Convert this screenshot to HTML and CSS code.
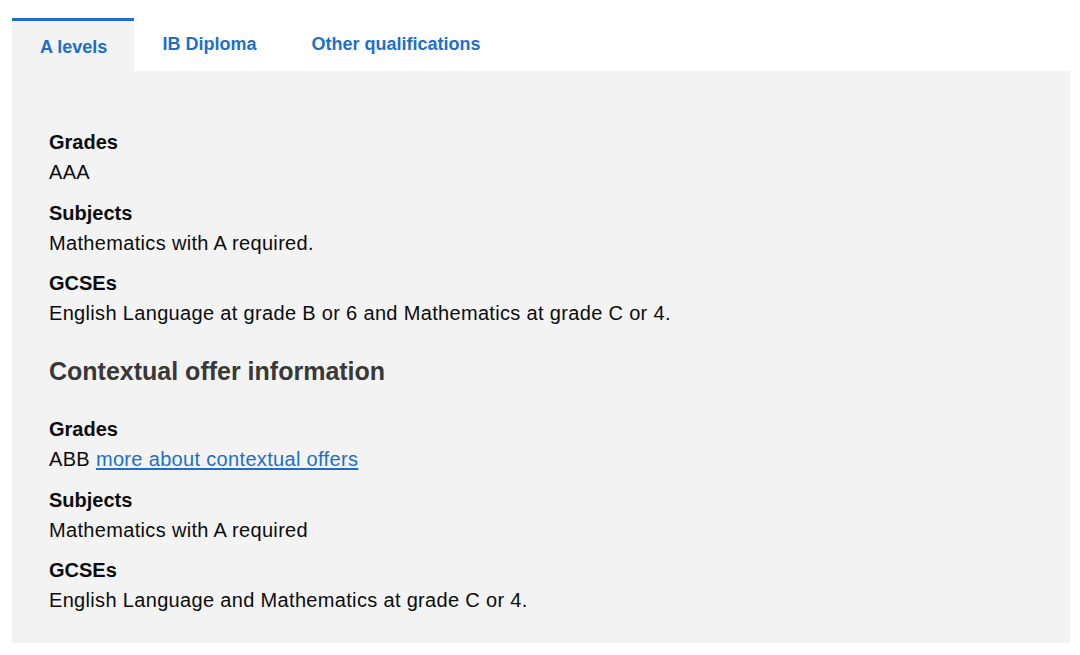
FILE: index.html
```html
<!DOCTYPE html>
<html lang="en">
<head>
<meta charset="utf-8">
<title>Entry requirements</title>
<link rel="stylesheet" href="styles.css">
</head>
<body>
<div class="tabs">
  <ul class="tab-list">
    <li class="tab tab-active"><a href="#alevels">A levels</a></li>
    <li class="tab"><a href="#ib">IB Diploma</a></li>
    <li class="tab"><a href="#other">Other qualifications</a></li>
  </ul>
  <section class="panel" id="alevels">
    <dl class="reqs">
      <dt>Grades</dt>
      <dd>AAA</dd>
      <dt>Subjects</dt>
      <dd>Mathematics with A required.</dd>
      <dt>GCSEs</dt>
      <dd>English Language at grade B or 6 and Mathematics at grade C or 4.</dd>
    </dl>
    <h2 class="panel-heading">Contextual offer information</h2>
    <dl class="reqs">
      <dt>Grades</dt>
      <dd>ABB <a href="#contextual">more about contextual offers</a></dd>
      <dt>Subjects</dt>
      <dd>Mathematics with A required</dd>
      <dt>GCSEs</dt>
      <dd>English Language and Mathematics at grade C or 4.</dd>
    </dl>
  </section>
</div>
</body>
</html>
```
FILE: styles.css
```css
html, body {
  margin: 0;
  padding: 0;
  background: #ffffff;
}
body {
  font-family: "Liberation Sans", Arial, Helvetica, sans-serif;
  color: #0b0c0c;
}
.tabs {
  padding: 18px 10px 12px 12px;
}
.tab-list {
  list-style: none;
  margin: 0;
  padding: 0;
  display: flex;
  align-items: flex-end;
}
.tab {
  padding: 0 27px 16px 28px;
  font-size: 18px;
  font-weight: bold;
  line-height: 22px;
}
.tab a {
  color: #1d6fc9;
  text-decoration: none;
}
.tab-active {
  background: #f3f3f3;
  border-top: 3px solid #1d6fc9;
  padding-top: 15px;
  padding-bottom: 13px;
}
.panel {
  background: #f3f3f3;
  padding: 56px 37px 17px 37px;
}
.reqs {
  margin: 0;
}
.reqs dt {
  font-size: 20px;
  font-weight: bold;
  line-height: 30px;
}
.reqs dd {
  margin: 0 0 10.5px 0;
  font-size: 20px;
  line-height: 30px;
  letter-spacing: 0.33px;
}
.reqs dd a {
  color: #1d6fc9;
  text-decoration: underline;
  text-underline-offset: 2px;
}
.panel-heading {
  margin: 28px 0 28px 0;
  font-size: 25px;
  line-height: 30px;
  font-weight: bold;
  color: #383838;
}
```
